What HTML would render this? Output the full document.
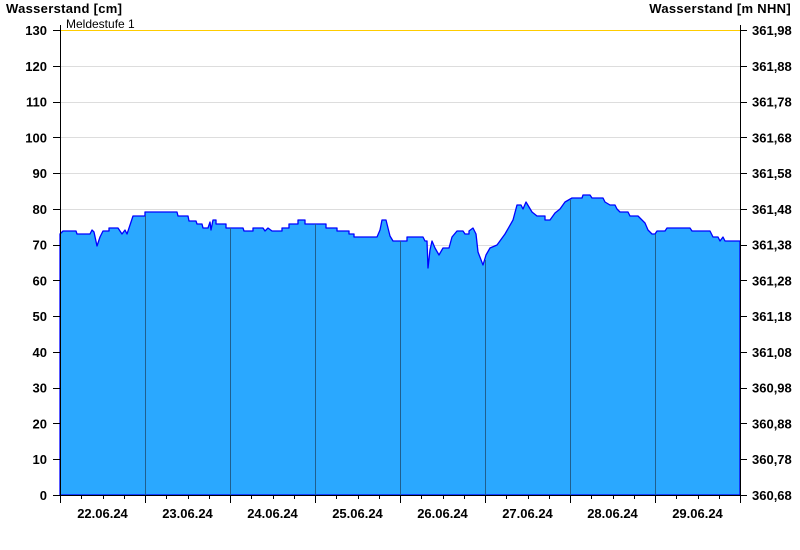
<!DOCTYPE html>
<html><head><meta charset="utf-8"><style>
body{margin:0;background:#fff;}
svg{display:block;font-family:"Liberation Sans",Arial,sans-serif;}
.t{font-weight:bold;font-size:13px;fill:#000;}
</style></head><body>
<svg width="800" height="550" viewBox="0 0 800 550">
<g stroke="#dddddd" stroke-width="1">
<line x1="60" x2="740" y1="66.5" y2="66.5"/><line x1="60" x2="740" y1="102.5" y2="102.5"/>
<line x1="60" x2="740" y1="137.5" y2="137.5"/><line x1="60" x2="740" y1="173.5" y2="173.5"/>
<line x1="60" x2="740" y1="209.5" y2="209.5"/><line x1="60" x2="740" y1="245.5" y2="245.5"/>
</g>
<line x1="60" x2="740" y1="30.5" y2="30.5" stroke="#ffcc00" stroke-width="1"/>
<text x="66" y="28" font-size="12" fill="#000">Meldestufe 1</text>
<polygon fill="#2aa8ff" stroke="#0000ff" stroke-width="1.3" stroke-linejoin="round" points="60,495 60,234 63,231 76,231 77,234 90,234 92,230 94,232 97,246 100,237 103,231 109,231 109,228 118,228 122,234 125,230 127,234 133,216 145,216 145,212 177,212 178,216 188,216 189,221 196,221 197,224 202,224 203,228 208,228 210,222 211,230 213,220 216,220 216,224 226,224 226,228 243,228 244,231 253,231 253,228 263,228 265,231 268,228 272,231 282,231 282,228 289,228 289,224 298,224 298,220 305,220 305,224 326,224 326,228 337,228 337,231 349,231 349,234 354,234 354,237 377,237 380,230 382,220 386,220 390,236 393,241 407,241 407,237 423,237 425,241 427,241 428,268 430,250 432,241 435,248 439,255 443,248 449,248 452,237 457,231 463,231 465,234 469,234 469,231 473,228 476,234 478,252 483,265 486,255 490,248 497,245 505,234 513,220 517,205 521,205 523,209 526,202 532,212 537,216 545,216 545,220 550,220 555,213 560,209 565,202 572,198 582,198 583,195 590,195 592,198 603,198 605,202 610,205 615,205 617,209 620,212 628,212 630,216 638,216 642,220 645,223 648,230 652,234 655,234 657,231 665,231 667,228 690,228 692,231 710,231 713,237 718,237 720,241 723,237 725,241 727,241 740,241 740,495"/>
<g stroke="#1f5f8f" stroke-width="1">
<line x1="145.5" x2="145.5" y1="216" y2="495"/><line x1="230.5" x2="230.5" y1="228" y2="495"/>
<line x1="315.5" x2="315.5" y1="224" y2="495"/><line x1="400.5" x2="400.5" y1="241" y2="495"/>
<line x1="485.5" x2="485.5" y1="260" y2="495"/><line x1="570.5" x2="570.5" y1="200" y2="495"/>
<line x1="655.5" x2="655.5" y1="234" y2="495"/>
</g>
<g stroke="#000" stroke-width="1">
<line x1="60.5" x2="60.5" y1="25" y2="496"/><line x1="740.5" x2="740.5" y1="25" y2="496"/>
<line x1="53" x2="747" y1="495.5" y2="495.5"/>
</g>
<g id="ticks" stroke="#000" stroke-width="1"></g>
<g class="t" text-anchor="end" id="ll"></g>
<g class="t" id="rl"></g>
<g class="t" text-anchor="middle" id="xl"></g>
<text class="t" x="6" y="13" font-size="14" letter-spacing="0.3">Wasserstand [cm]</text>
<text class="t" x="791" y="13" text-anchor="end" font-size="14" letter-spacing="0.3">Wasserstand [m NHN]</text>
</svg>
<script>
var ns="http://www.w3.org/2000/svg";
function el(p,t,a,txt){var e=document.createElementNS(ns,t);for(var k in a)e.setAttribute(k,a[k]);if(txt)e.textContent=txt;document.getElementById(p).appendChild(e);}
for(var i=0;i<=13;i++){var y=30+(13-i)*35.77;var yy=Math.round(y)+0.5;
el("ticks","line",{x1:53,x2:60,y1:yy,y2:yy});el("ticks","line",{x1:740,x2:747,y1:yy,y2:yy});
el("ll","text",{x:47,y:y+5},String(i*10));
var r=(360.68+i*0.1).toFixed(2).replace(".",",");el("rl","text",{x:752,y:y+5},r);}
for(var j=0;j<=32;j++){var x=Math.round(60+j*21.25)+0.5;el("ticks","line",{x1:x,x2:x,y1:495,y2:j%4==0?503:499});}
var d=["22.06.24","23.06.24","24.06.24","25.06.24","26.06.24","27.06.24","28.06.24","29.06.24"];
for(var k=0;k<8;k++)el("xl","text",{x:102.5+85*k,y:518},d[k]);
</script>
</body></html>
